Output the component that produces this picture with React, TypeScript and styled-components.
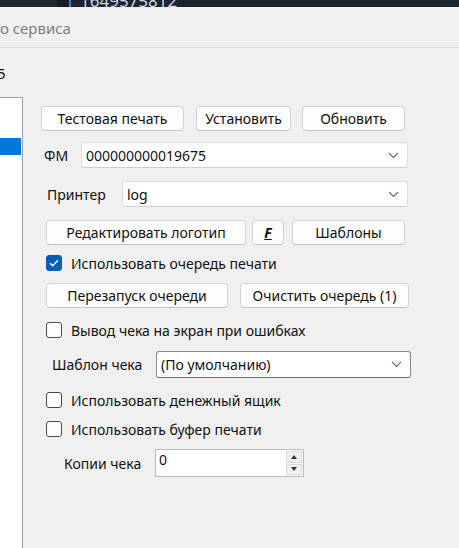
import { createGlobalStyle } from 'styled-components';
import styled from 'styled-components';

const GlobalStyle = createGlobalStyle`
  html, body {
    margin: 0;
    padding: 0;
    background: #f0f0f0;
  }
  body {
    font-family: "Noto Sans", "Open Sans", sans-serif;
    font-size: 14px;
    color: #111111;
  }
`;

const Page = styled.div`
  width: 459px;
  height: 548px;
  overflow: hidden;
  display: flex;
  flex-direction: column;
  background: #f0f0f0;
`;

const TopStrip = styled.div`
  height: 7px;
  flex: none;
  display: flex;
  overflow: hidden;
  background: #1b2430;
`;

const StripLeft = styled.div`
  width: 57px;
  background: #1e2833;
`;

const StripGap = styled.div`
  width: 12px;
  background: #151c26;
`;

const StripCursor = styled.div`
  width: 2px;
  background: #3d7fd4;
`;

const StripText = styled.span`
  margin: -8px 0 0 9px;
  font-size: 17px;
  line-height: 18px;
  color: #cfd7e2;
`;

const TitleBar = styled.div`
  height: 39px;
  flex: none;
  display: flex;
  align-items: center;
  border-bottom: 1px solid #dadada;
  font-size: 15px;
  color: #7d7d7d;
  padding-top: 1px;
`;

const Caption = styled.div`
  height: 49px;
  flex: none;
  display: flex;
  align-items: center;
  font-size: 15px;
  margin-left: -3px;
`;

const Body = styled.div`
  flex: 1;
  display: flex;
  align-items: flex-start;
  min-height: 0;
`;

const SideList = styled.div`
  width: 23px;
  height: 460px;
  flex: none;
  background: #ffffff;
  border: 1px solid #a0a0a0;
  border-left: none;
  border-bottom: none;
  padding-top: 40px;
  box-sizing: border-box;
`;

const SideSelected = styled.div`
  height: 17px;
  margin-right: 1px;
  background: #0078d7;
`;

const Content = styled.div`
  flex: 1;
  display: flex;
  flex-direction: column;
  padding-top: 9px;
`;

const Row = styled.div<{ $mt: number; $ml: number; $h?: number }>`
  display: flex;
  align-items: center;
  margin-top: ${(p) => p.$mt}px;
  margin-left: ${(p) => p.$ml}px;
  height: ${(p) => p.$h ?? 25}px;
  flex: none;
`;

const Button = styled.button<{ $w: number; $gap?: number }>`
  width: ${(p) => p.$w}px;
  height: 100%;
  margin-right: ${(p) => p.$gap ?? 0}px;
  box-sizing: border-box;
  background: #fdfdfd;
  border: 1px solid #d3d3d3;
  border-bottom-color: #c4c4c4;
  border-radius: 4px;
  font-family: inherit;
  font-size: 14px;
  color: #111111;
  padding: 0;
  display: flex;
  align-items: center;
  justify-content: center;
`;

const FGlyph = styled.span`
  font-weight: 700;
  font-style: italic;
  text-decoration: underline;
  font-size: 14px;
`;

const Label = styled.span<{ $w: number }>`
  width: ${(p) => p.$w}px;
  flex: none;
`;

const Combo = styled.div<{ $w: number; $dark?: boolean }>`
  width: ${(p) => p.$w}px;
  height: 100%;
  box-sizing: border-box;
  background: #ffffff;
  border: 1px solid ${(p) => (p.$dark ? '#8a8a8a' : '#dcdcdc')};
  border-bottom-color: ${(p) => (p.$dark ? '#6e6e6e' : '#cfcfcf')};
  border-radius: 3px;
  display: flex;
  align-items: center;
  padding: 0 8px 0 4px;
`;

const ComboText = styled.span`
  flex: 1;
`;

const Chevron = () => (
  <svg width="11" height="7" viewBox="0 0 11 7">
    <path d="M1 1 L5.5 5.5 L10 1" fill="none" stroke="#6a6a6a" strokeWidth="1.1" />
  </svg>
);

const CheckRow = styled.label`
  display: flex;
  align-items: center;
  gap: 9px;
`;

const Box = styled.span<{ $on?: boolean }>`
  width: 16px;
  height: 16px;
  box-sizing: border-box;
  border-radius: 3px;
  border: 1px solid ${(p) => (p.$on ? '#005fb8' : '#4a4a4a')};
  background: ${(p) => (p.$on ? '#005fb8' : '#fdfdfd')};
  display: flex;
  align-items: center;
  justify-content: center;
`;

const Tick = () => (
  <svg width="10" height="8" viewBox="0 0 10 8">
    <path d="M1 4.2 L3.7 6.7 L9 1.3" fill="none" stroke="#ffffff" strokeWidth="1.4" />
  </svg>
);

const Spin = styled.div`
  width: 149px;
  height: 100%;
  box-sizing: border-box;
  background: #ffffff;
  border: 1px solid #b9b9b9;
  display: flex;
`;

const SpinValue = styled.span`
  flex: 1;
  padding: 0 3px;
  line-height: 20px;
  color: #111111;
`;

const SpinButtons = styled.div`
  width: 16px;
  display: flex;
  flex-direction: column;
  margin: 1px 1px 1px 0;
  gap: 1px;
`;

const SpinButton = styled.div<{ $down?: boolean }>`
  flex: 1;
  background: #f0f0f0;
  border: 1px solid #dadada;
  display: flex;
  align-items: center;
  justify-content: center;
  &::after {
    content: '';
    border-left: 3.5px solid transparent;
    border-right: 3.5px solid transparent;
    ${(p) => (p.$down ? 'border-top: 4px solid #333;' : 'border-bottom: 4px solid #333;')}
  }
`;

export default function App() {
  return (
    <Page>
      <GlobalStyle />
      <TopStrip>
        <StripLeft />
        <StripGap />
        <StripCursor />
        <StripText>1649575812</StripText>
      </TopStrip>
      <TitleBar>о сервиса</TitleBar>
      <Caption>5</Caption>
      <Body>
        <SideList>
          <SideSelected />
        </SideList>
        <Content>
          <Row $mt={0} $ml={18}>
            <Button $w={143} $gap={12}>Тестовая печать</Button>
            <Button $w={95} $gap={11}>Установить</Button>
            <Button $w={103}>Обновить</Button>
          </Row>
          <Row $mt={11} $ml={21} $h={26}>
            <Label $w={37}>ФМ</Label>
            <Combo $w={327}>
              <ComboText>000000000019675</ComboText>
              <Chevron />
            </Combo>
          </Row>
          <Row $mt={13} $ml={24} $h={26}>
            <Label $w={75}>Принтер</Label>
            <Combo $w={286}>
              <ComboText>log</ComboText>
              <Chevron />
            </Combo>
          </Row>
          <Row $mt={13} $ml={23}>
            <Button $w={200} $gap={6}>Редактировать логотип</Button>
            <Button $w={32} $gap={8}>
              <FGlyph>F</FGlyph>
            </Button>
            <Button $w={113}>Шаблоны</Button>
          </Row>
          <Row $mt={10} $ml={23} $h={16}>
            <CheckRow>
              <Box $on>
                <Tick />
              </Box>
              Использовать очередь печати
            </CheckRow>
          </Row>
          <Row $mt={12} $ml={23}>
            <Button $w={182} $gap={12}>Перезапуск очереди</Button>
            <Button $w={169}>Очистить очередь (1)</Button>
          </Row>
          <Row $mt={14} $ml={23} $h={16}>
            <CheckRow>
              <Box />
              Вывод чека на экран при ошибках
            </CheckRow>
          </Row>
          <Row $mt={13} $ml={29} $h={27}>
            <Label $w={104}>Шаблон чека</Label>
            <Combo $w={255} $dark>
              <ComboText>(По умолчанию)</ComboText>
              <Chevron />
            </Combo>
          </Row>
          <Row $mt={14} $ml={23} $h={16}>
            <CheckRow>
              <Box />
              Использовать денежный ящик
            </CheckRow>
          </Row>
          <Row $mt={13} $ml={23} $h={16}>
            <CheckRow>
              <Box />
              Использовать буфер печати
            </CheckRow>
          </Row>
          <Row $mt={12} $ml={41} $h={28}>
            <Label $w={91}>Копии чека</Label>
            <Spin>
              <SpinValue>0</SpinValue>
              <SpinButtons>
                <SpinButton />
                <SpinButton $down />
              </SpinButtons>
            </Spin>
          </Row>
        </Content>
      </Body>
    </Page>
  );
}
